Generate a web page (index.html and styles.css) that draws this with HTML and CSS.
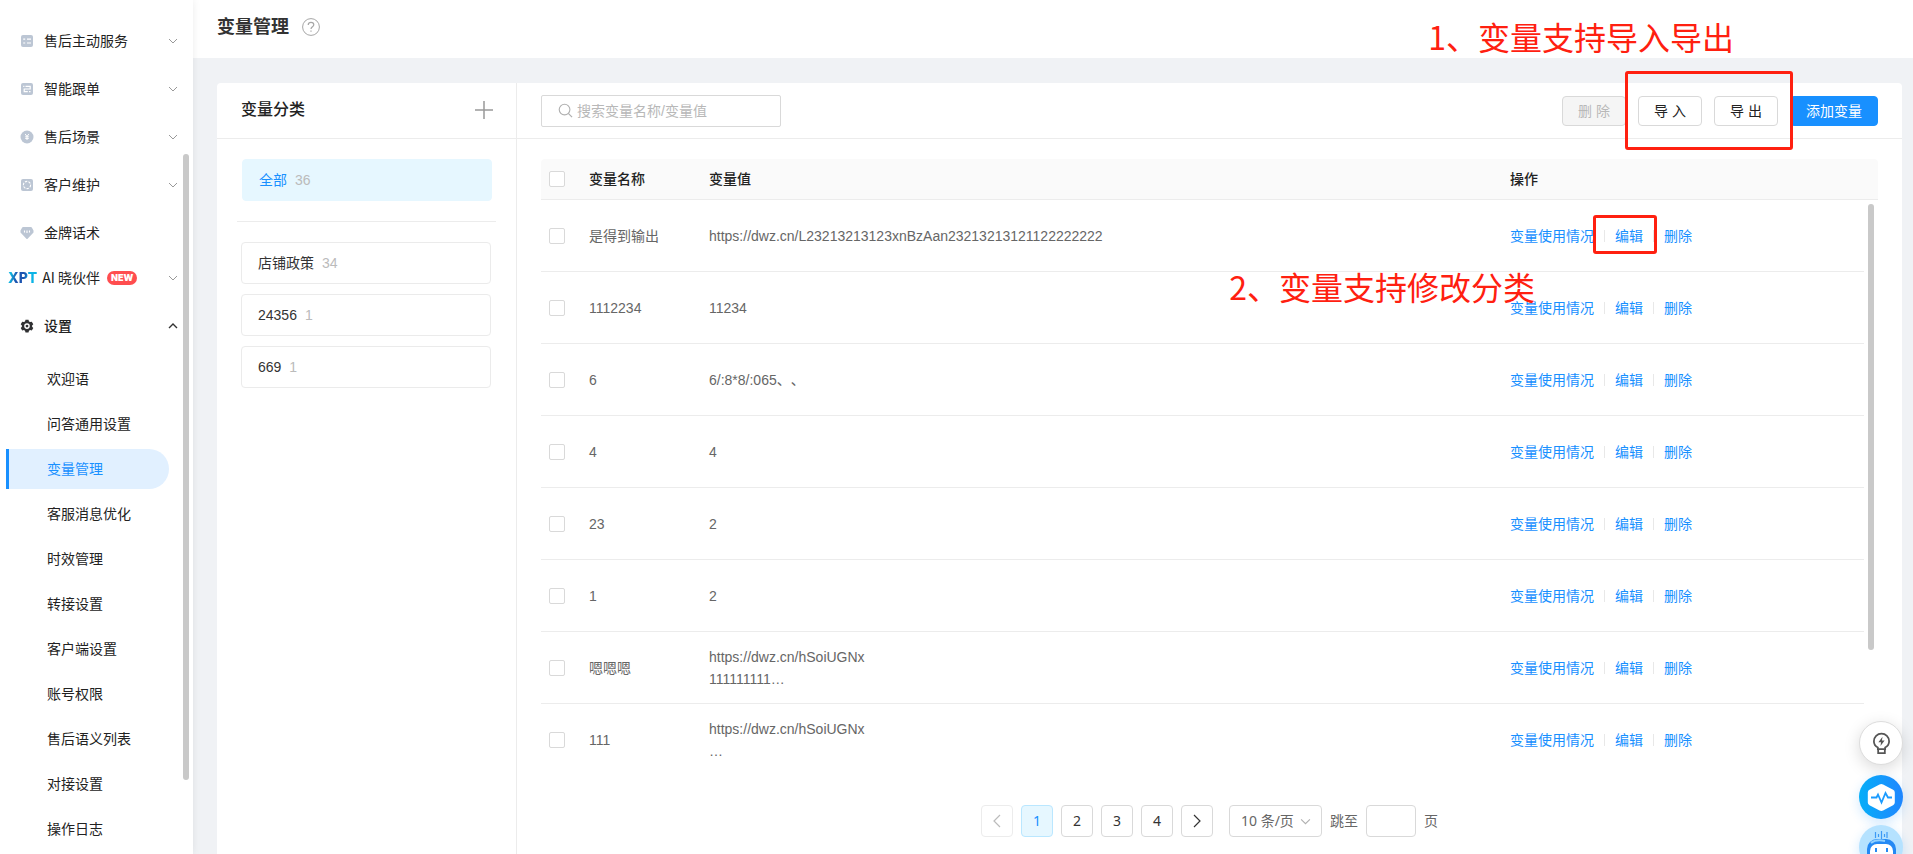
FILE: index.html
```html
<!DOCTYPE html>
<html lang="zh-CN">
<head>
<meta charset="utf-8">
<title>变量管理</title>
<link rel="stylesheet" href="styles.css">
</head>
<body>
<svg class="defs" aria-hidden="true">
  <symbol id="down" viewBox="0 0 10 10"><path d="M1 3l4 4 4-4" fill="none" stroke="currentColor" stroke-width="1"/></symbol>
  <symbol id="up" viewBox="0 0 10 10"><path d="M1 7l4-4 4 4" fill="none" stroke="currentColor" stroke-width="1.4"/></symbol>
</svg>
<div class="app">
  <aside class="sidebar">
    <nav>
      <ul class="menu">
        <li><a href="#" class="menu-item"><svg class="mi" viewBox="0 0 14 14"><rect x="1" y="1" width="12" height="12" rx="2" fill="#bcc6d4"/><path d="M3.200 5.200h2M3.200 9h2M7 5.200h4M7 9h4" stroke="#fff" stroke-width="1.200"/></svg><span>售后主动服务</span><svg class="arrow"><use href="#down"/></svg></a></li>
        <li><a href="#" class="menu-item"><svg class="mi" viewBox="0 0 14 14"><rect x="1" y="1" width="12" height="12" rx="2" fill="#bcc6d4"/><path d="M3.200 4.300h1.200M5.500 4.300h4.700v2.700H4.200v2.700h3.600M9 9.700h1.500" fill="none" stroke="#fff" stroke-width="1.200"/></svg><span>智能跟单</span><svg class="arrow"><use href="#down"/></svg></a></li>
        <li><a href="#" class="menu-item"><svg class="mi" viewBox="0 0 14 14"><circle cx="7" cy="7" r="6.500" fill="#bcc6d4"/><path d="M5.200 4L7 6.500 8.800 4M7 6.500V10M5.200 6.800h3.600M5.200 8.400h3.600" fill="none" stroke="#fff" stroke-width="1"/></svg><span>售后场景</span><svg class="arrow"><use href="#down"/></svg></a></li>
        <li><a href="#" class="menu-item"><svg class="mi" viewBox="0 0 14 14"><rect x="1" y="1" width="12" height="12" rx="2" fill="#bcc6d4"/><circle cx="7" cy="7" r="3.600" fill="none" stroke="#fff" stroke-width="1.100" stroke-dasharray="2.400 1.200"/></svg><span>客户维护</span><svg class="arrow"><use href="#down"/></svg></a></li>
        <li><a href="#" class="menu-item"><svg class="mi" viewBox="0 0 14 14"><path d="M3 1h8a1 1 0 0 1 .8.400L13.500 4.500v2L7.600 12.700a.8.800 0 0 1-1.200 0L.5 6.500v-2L2.200 1.400A1 1 0 0 1 3 1z" fill="#bcc6d4"/><path d="M4.500 4.500v2M7 4.500v2.500M9.500 4.500v2" stroke="#fff" stroke-width="1.100"/></svg><span>金牌话术</span></a></li>
        <li><a href="#" class="menu-item menu-ai"><b class="xpt">XPT</b><span>AI 晓伙伴</span><em class="new">NEW</em><svg class="arrow"><use href="#down"/></svg></a></li>
        <li><a href="#" class="menu-item open"><svg class="mi" viewBox="0 0 14 14"><path fill="#303133" fill-rule="evenodd" d="M5.500.8h3l.5 1.600 1.100.7 1.700-.4 1.500 2.600-1.200 1.200v1.300l1.200 1.200-1.500 2.500-1.700-.4-1.100.7-.5 1.600h-3L5 11.800l-1.100-.7-1.700.4L.7 9l1.200-1.200V6.500L.7 5.300l1.500-2.600 1.700.4L5 2.400zM7 4.300a2.800 2.800 0 1 0 0 5.600 2.800 2.800 0 0 0 0-5.600zm0 1.400a1.400 1.400 0 1 1 0 2.800 1.400 1.400 0 0 1 0-2.800z"/></svg><span>设置</span><svg class="arrow"><use href="#up"/></svg></a></li>
      </ul>
      <ul class="submenu">
        <li><a href="#">欢迎语</a></li>
        <li><a href="#">问答通用设置</a></li>
        <li><a href="#" class="current">变量管理</a></li>
        <li><a href="#">客服消息优化</a></li>
        <li><a href="#">时效管理</a></li>
        <li><a href="#">转接设置</a></li>
        <li><a href="#">客户端设置</a></li>
        <li><a href="#">账号权限</a></li>
        <li><a href="#">售后语义列表</a></li>
        <li><a href="#">对接设置</a></li>
        <li><a href="#">操作日志</a></li>
      </ul>
    </nav>
    <i class="thumb side-thumb"></i>
  </aside>

  <main class="main">
    <header class="topbar">
      <h1>变量管理</h1>
      <svg class="help" viewBox="0 0 18 18"><circle cx="9" cy="9" r="8.400" fill="none" stroke="#a6a6a6" stroke-width="1"/><path d="M6.200 7C6.200 5.300 7.400 4.300 9 4.300s2.800 1 2.800 2.500C11.800 8.800 9 8.800 9 11M9 12.400v1.400" fill="none" stroke="#a6a6a6" stroke-width="1.200"/></svg>
    </header>

    <div class="card">
      <section class="cats">
        <div class="cats-head">
          <h2>变量分类</h2>
          <button type="button" class="plus" aria-label="添加分类"><svg viewBox="0 0 18 18"><path d="M9 0v18M0 9h18" stroke="#999" stroke-width="1.500"/></svg></button>
        </div>
        <div class="cats-body">
          <button type="button" class="cat cat-all">全部<small>36</small></button>
          <hr>
          <div class="cat-list">
            <button type="button" class="cat">店铺政策<small>34</small></button>
            <button type="button" class="cat">24356<small>1</small></button>
            <button type="button" class="cat">669<small>1</small></button>
          </div>
        </div>
      </section>

      <section class="vars">
        <div class="toolbar">
          <label class="search">
            <svg viewBox="0 0 16 16"><circle cx="7" cy="7" r="5.700" fill="none" stroke="#b0b0b0" stroke-width="1.200"/><path d="M11 11l4 4" stroke="#b0b0b0" stroke-width="1.300"/></svg>
            <input type="text" placeholder="搜索变量名称/变量值" aria-label="搜索变量名称/变量值">
          </label>
          <div class="actions">
            <button type="button" class="btn" disabled>删 除</button>
            <div class="pair">
              <button type="button" class="btn">导 入</button>
              <button type="button" class="btn">导 出</button>
              <i class="frame frame-pair"></i>
            </div>
            <button type="button" class="btn primary">添加变量</button>
          </div>
        </div>

        <div class="table-wrap">
          <table>
            <colgroup><col class="c-check"><col class="c-name"><col><col class="c-op"><col class="c-bar"></colgroup>
            <thead>
              <tr><th><input type="checkbox" aria-label="全选"></th><th>变量名称</th><th>变量值</th><th>操作</th><th class="bar-cell"></th></tr>
            </thead>
            <tbody>
              <tr><td><input type="checkbox" aria-label="选择"></td><td>是得到输出</td><td>https://dwz.cn/L23213213123xnBzAan23213213121122222222</td><td><div class="ops"><a href="#">变量使用情况</a><a href="#" class="marked">编辑<i class="frame frame-edit"></i></a><a href="#">删除</a></div></td></tr>
              <tr><td><input type="checkbox" aria-label="选择"></td><td>1112234</td><td>11234</td><td><div class="ops"><a href="#">变量使用情况</a><a href="#">编辑</a><a href="#">删除</a></div></td></tr>
              <tr><td><input type="checkbox" aria-label="选择"></td><td>6</td><td>6/:8*8/:065、、</td><td><div class="ops"><a href="#">变量使用情况</a><a href="#">编辑</a><a href="#">删除</a></div></td></tr>
              <tr><td><input type="checkbox" aria-label="选择"></td><td>4</td><td>4</td><td><div class="ops"><a href="#">变量使用情况</a><a href="#">编辑</a><a href="#">删除</a></div></td></tr>
              <tr><td><input type="checkbox" aria-label="选择"></td><td>23</td><td>2</td><td><div class="ops"><a href="#">变量使用情况</a><a href="#">编辑</a><a href="#">删除</a></div></td></tr>
              <tr><td><input type="checkbox" aria-label="选择"></td><td>1</td><td>2</td><td><div class="ops"><a href="#">变量使用情况</a><a href="#">编辑</a><a href="#">删除</a></div></td></tr>
              <tr><td><input type="checkbox" aria-label="选择"></td><td>嗯嗯嗯</td><td>https://dwz.cn/hSoiUGNx<br>111111111…</td><td><div class="ops"><a href="#">变量使用情况</a><a href="#">编辑</a><a href="#">删除</a></div></td></tr>
              <tr><td><input type="checkbox" aria-label="选择"></td><td>111</td><td>https://dwz.cn/hSoiUGNx<br>…</td><td><div class="ops"><a href="#">变量使用情况</a><a href="#">编辑</a><a href="#">删除</a></div></td></tr>
            </tbody>
          </table>
          <i class="thumb table-thumb"></i>
        </div>

        <div class="pager">
          <button type="button" class="page off" disabled aria-label="上一页"><svg viewBox="0 0 14 14"><path d="M10 1L4 7l6 6" fill="none" stroke="currentColor" stroke-width="1.200"/></svg></button>
          <button type="button" class="page on">1</button>
          <button type="button" class="page">2</button>
          <button type="button" class="page">3</button>
          <button type="button" class="page">4</button>
          <button type="button" class="page" aria-label="下一页"><svg viewBox="0 0 14 14"><path d="M4 1l6 6-6 6" fill="none" stroke="currentColor" stroke-width="1.200"/></svg></button>
          <div class="size">
            <select aria-label="每页条数"><option>10 条/页</option></select>
            <svg><use href="#down"/></svg>
          </div>
          <label class="jump"><span>跳至</span><input type="text" aria-label="页码"><span>页</span></label>
        </div>
      </section>
    </div>

    <p class="note note-1">1、变量支持导入导出</p>
    <p class="note note-2">2、变量支持修改分类</p>

    <div class="floats">
      <button type="button" class="float tip" aria-label="建议"><svg viewBox="0 0 24 24" fill="none" stroke="#555" stroke-width="1.700"><path d="M8.500 17.500v-1.700C6 14.600 4.700 12.500 4.700 9.900a7.300 7.300 0 0 1 14.600 0c0 2.600-1.300 4.700-3.800 5.900v1.700z"/><path d="M8.800 18v3.300h6.400V18" /><path d="M13 5.500L9 10.800h2.600L11 14.500l4-5.300h-2.600z" fill="#555" stroke="none"/></svg></button>
      <button type="button" class="float pulse" aria-label="诊断"><svg viewBox="0 0 44 44"><path d="M20.500 9.500a4 4 0 0 1 3.600 0l10 5.200a3 3 0 0 1 1.700 2.700v10.200a3 3 0 0 1-1.700 2.700l-10 5.200a4 4 0 0 1-3.600 0l-10-5.200a3 3 0 0 1-1.700-2.700V17.400a3 3 0 0 1 1.700-2.700z" fill="#fff"/><path d="M12 22.500h5.500l1.500-3 3.500 8 4-9.500 2.500 4.500H33" fill="none" stroke="#1a9bff" stroke-width="1.800"/></svg></button>
      <button type="button" class="float bot" aria-label="机器人"><svg viewBox="0 0 44 44"><path d="M16.500 7v6M19.500 9v3M22.500 6v8M25.500 9v3M28 7v6" stroke="#3d9af5" stroke-width="1.200"/><rect x="8" y="14" width="29" height="24" rx="10" fill="#2489f4"/><path d="M12 18q5-4 14-2" stroke="#8fd0ff" stroke-width="2" fill="none"/><rect x="11" y="19" width="23" height="17" rx="7" fill="#fff"/><path d="M17 23v4M28 23v4" stroke="#2489f4" stroke-width="2"/></svg></button>
    </div>
  </main>
</div>
</body>
</html>
```

FILE: styles.css
```css
* { box-sizing: border-box; }
body {
  margin: 0;
  font: 14px/22px "Liberation Sans", "Noto Sans CJK SC", sans-serif;
  color: #666;
  background: #f0f2f5;
  text-spacing-trim: space-all;
}
h1, h2, p, ul { margin: 0; padding: 0; }
ul { list-style: none; }
a { text-decoration: none; }
button, input, select { font: inherit; color: inherit; margin: 0; }
svg { display: block; }
.defs { position: absolute; width: 0; height: 0; }
.app { display: flex; height: 100vh; overflow: hidden; }

/* sidebar */
.sidebar {
  position: relative;
  z-index: 1;
  flex: none;
  width: 193px;
  padding-top: 17px;
  overflow: hidden;
  background: #fff;
  box-shadow: 0 0 8px rgba(0, 0, 0, .08);
}
.menu-item {
  display: flex;
  align-items: center;
  height: 48px;
  padding: 0 15px 0 20px;
  font-family: "Noto Sans CJK SC", sans-serif;
  color: #222;
}
.menu-item span { padding-bottom: 2px; }
.mi { width: 14px; height: 14px; margin-right: 10px; }
.arrow { width: 10px; height: 10px; margin-left: auto; color: #999; }
.open .arrow { color: #333; }
.open { font-weight: 500; }
.menu-ai { height: 42px; margin-bottom: 3px; padding-left: 8px; }
.xpt {
  margin-right: 5px;
  font: 800 14px/20px Inter, sans-serif;
  color: transparent;
  background: linear-gradient(100deg, #10b5e0 0 12%, #1d55b0 30% 55%, #0cb4e6 70%);
  background-clip: text;
}
.new {
  height: 14px;
  margin-left: 7px;
  padding: 0 4px;
  border-radius: 7px;
  background: #ff4d4f;
  color: #fff;
  font: 900 9px/14px Inter, sans-serif;
  font-style: normal;
}
.submenu { padding-top: 7px; }
.submenu li { padding: 2px 24px 3px 6px; }
.submenu a {
  display: block;
  height: 40px;
  padding-left: 38px;
  border-left: 3px solid transparent;
  font-family: "Noto Sans CJK SC", sans-serif;
  line-height: 38px;
  color: #222;
}
.submenu .current {
  border-color: #1890ff;
  border-radius: 0 20px 20px 0;
  background: #e1f0ff;
  color: #1890ff;
}
.thumb { position: absolute; width: 6px; border-radius: 3px; background: #c9c9c9; }
.side-thumb { top: 154px; right: 4px; height: 626px; }

/* main */
.main { position: relative; display: flex; flex: 1; flex-direction: column; min-width: 0; }
.topbar {
  display: flex;
  flex: none;
  align-items: center;
  gap: 13px;
  height: 58px;
  padding: 0 24px 4px;
  background: #fff;
}
h1 { font-size: 18px; line-height: 28px; font-weight: 700; color: #333; }
.help { width: 18px; height: 18px; }
.card {
  display: flex;
  flex: 1;
  min-height: 0;
  margin: 25px 11px 0 24px;
  border-radius: 4px 4px 0 0;
  background: #fff;
}
.cats { flex: none; width: 300px; border-right: 1px solid #ececec; }
.cats-head, .toolbar {
  display: flex;
  align-items: center;
  justify-content: space-between;
  height: 56px;
  border-bottom: 1px solid #ececec;
}
.cats-head { padding: 0 23px 2px 24px; }
h2 { font-size: 16px; line-height: 24px; font-weight: 500; color: #222; }
.plus { padding: 0; border: 0; background: none; }
.plus svg { width: 18px; height: 18px; }
.cats-body { padding: 20px 20px 0; }
.cat {
  display: block;
  width: 250px;
  height: 42px;
  padding: 0 16px;
  border: 1px solid #ebebeb;
  border-radius: 4px;
  background: #fff;
  color: #333;
  text-align: left;
}
.cat small { margin-left: 8px; font-size: 14px; color: #bbb; }
.cat-all { margin-left: 5px; border-color: #e6f7ff; background: #e6f7ff; color: #1890ff; }
.cats hr { height: 1px; margin: 20px 0; border: 0; background: #ececec; }
.cat-list { display: grid; gap: 10px; padding-left: 4px; }

.vars { display: flex; flex: 1; flex-direction: column; min-width: 0; }
.toolbar { flex: none; padding: 0 24px; }
.search {
  display: flex;
  align-items: center;
  gap: 4px;
  width: 240px;
  height: 32px;
  padding: 0 16px;
  border: 1px solid #d9d9d9;
  border-radius: 2px;
}
.search svg { flex: none; width: 15px; height: 15px; }
.search input { width: 100%; padding: 0; border: 0; outline: 0; background: none; }
.search input::placeholder { color: #b8b8b8; }
.actions, .pair { display: flex; gap: 12px; }
.pair { position: relative; }
.btn {
  min-width: 64px;
  height: 30px;
  padding: 0 15px;
  border: 1px solid #d9d9d9;
  border-radius: 4px;
  background: #fff;
  color: #222;
  line-height: 28px;
  white-space: nowrap;
}
.btn:disabled { background: #f5f5f5; color: #b8b8b8; }
.primary { border-color: #1890ff; background: #1890ff; color: #fff; }

/* table */
.table-wrap { position: relative; flex: 1; min-height: 0; margin: 20px 24px 0; overflow: hidden; }
table { width: 100%; border-spacing: 0; table-layout: fixed; }
.c-check { width: 40px; }
.c-name { width: 120px; }
.c-op { width: 362px; }
.c-bar { width: 14px; }
th, td { padding: 0 8px; border-bottom: 1px solid #ececec; text-align: left; }
th { height: 41px; background: #fafafa; color: #222; font-weight: 500; }
td { height: 72px; }
th:first-child { border-top-left-radius: 4px; }
.bar-cell { padding: 0; border-top-right-radius: 4px; }
input[type="checkbox"] {
  display: block;
  width: 16px;
  height: 16px;
  border: 1px solid #d9d9d9;
  border-radius: 2px;
  background: #fff;
  appearance: none;
}
.ops { display: flex; align-items: center; }
.ops a { color: #1890ff; }
.ops a + a { display: flex; align-items: center; }
.ops a + a::before { width: 1px; height: 12px; margin: 0 10px; background: #e8e8e8; content: ""; }
.table-thumb { top: 45px; right: 4px; height: 446px; }

/* pagination */
.pager { display: flex; flex: none; justify-content: center; gap: 8px; padding: 30px 0 17px; }
.page {
  display: grid;
  place-items: center;
  width: 32px;
  height: 32px;
  padding: 0;
  border: 1px solid #d9d9d9;
  border-radius: 4px;
  background: #fff;
  color: #333;
  font-family: "Noto Sans", sans-serif;
}
.page svg { width: 14px; height: 14px; }
.on { border-color: #bae7ff; background: #e6f7ff; color: #1890ff; }
.off { border-color: #ececec; color: #bbb; }
.size { position: relative; width: 93px; margin-left: 8px; }
.size select {
  width: 100%;
  height: 32px;
  padding: 0 11px;
  border: 1px solid #d9d9d9;
  border-radius: 4px;
  background: #fff;
  font-family: "Noto Sans", "Noto Sans CJK SC", sans-serif;
  appearance: none;
}
.size svg { position: absolute; top: 11px; right: 11px; width: 11px; height: 11px; color: #b0b0b0; pointer-events: none; }
.jump { display: flex; align-items: center; gap: 8px; }
.jump input { width: 50px; height: 32px; border: 1px solid #d9d9d9; border-radius: 4px; background: #fff; }

/* annotations */
.frame { position: absolute; border: 3px solid #ff2010; border-radius: 3px; pointer-events: none; }
.frame-pair { inset: -25px -15px -24px -13px; }
.marked { position: relative; }
.frame-edit { inset: -10px -14px -7px -1px; }
.note {
  position: absolute;
  font: 32px/40px "Noto Sans CJK SC", sans-serif;
  color: #ff2010;
  white-space: nowrap;
}
.note-1 { top: 16px; right: 179px; }
.note-2 { top: 266px; right: 378px; }

/* floating buttons */
.floats { position: absolute; top: 721px; right: 10px; display: grid; }
.float { width: 44px; height: 44px; padding: 0; border: 0; border-radius: 50%; }
.float svg { width: 44px; height: 44px; }
.float.tip {
  display: grid;
  place-items: center;
  margin-bottom: 10px;
  border: 1px solid #ddd;
  background: #fff;
  box-shadow: 0 4px 16px rgba(0, 0, 0, .15);
}
.tip svg { width: 25px; height: 25px; }
.pulse { margin-bottom: 6px; background: linear-gradient(90deg, #06aef8, #1f86ff); box-shadow: 0 4px 12px rgba(24, 144, 255, .2); }
.bot { background: #b5e2ff; box-shadow: 0 4px 12px rgba(24, 144, 255, .2); }
```
